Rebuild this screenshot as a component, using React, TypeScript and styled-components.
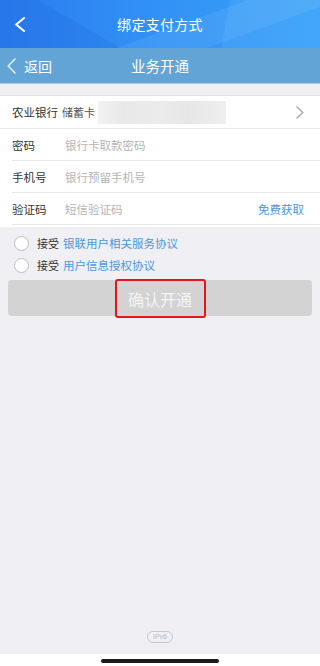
import React from "react";
import styled, { createGlobalStyle } from "styled-components";

const Global = createGlobalStyle`
  html, body { margin: 0; padding: 0; }
  body {
    font-family: "Noto Sans CJK SC", "Noto Sans", sans-serif;
    background: #ffffff;
  }
  * { box-sizing: border-box; }
`;

const Screen = styled.div`
  width: 320px;
  min-height: 666px;
  display: flex;
  flex-direction: column;
  background: #efeff4;
`;

const TopBar = styled.div`
  height: 48px;
  display: grid;
  grid-template-columns: 48px 1fr 48px;
  align-items: center;
  color: #fff;
  background:
    linear-gradient(160deg, rgba(255,255,255,0) 55%, rgba(255,255,255,0.07) 55%, rgba(255,255,255,0.07) 75%, rgba(255,255,255,0) 75%),
    linear-gradient(30deg, rgba(0,40,160,0.08) 30%, rgba(0,0,0,0) 30%),
    linear-gradient(100deg, rgba(255,255,255,0) 70%, rgba(255,255,255,0.06) 70%),
    linear-gradient(90deg, #2a7cf0 0%, #3190f5 45%, #38a1f8 100%);
`;

const TopBack = styled.div`
  display: flex;
  align-items: center;
  padding-left: 15px;
`;

const TopTitle = styled.div`
  text-align: center;
  font-size: 14px;
  letter-spacing: 0.3px;
`;

const SubBar = styled.div`
  height: 36px;
  display: grid;
  grid-template-columns: 80px 1fr 80px;
  align-items: center;
  background: #62a4d6;
  color: #fff;
  border-bottom: 1px solid #a9cdec;
`;

const SubBack = styled.div`
  display: flex;
  align-items: center;
  gap: 8px;
  padding-left: 7px;
  font-size: 14px;
`;

const SubTitle = styled.div`
  text-align: center;
  font-size: 14.5px;
`;

const Card = styled.div`
  margin-top: 11px;
  background: #fff;
  border-top: 1px solid #e4e4e8;
  padding-bottom: 2px;
`;

const Row = styled.div<{ $first?: boolean }>`
  height: ${(p) => (p.$first ? 33 : 32)}px;
  display: flex;
  align-items: center;
  margin-left: ${(p) => (p.$first ? 0 : 12)}px;
  padding-left: ${(p) => (p.$first ? 12 : 0)}px;
  padding-right: 16px;
  border-bottom: 1px solid #e6e6e6;
  font-size: 11.5px;
`;

const Label = styled.span`
  width: 53px;
  color: #333;
  flex-shrink: 0;
`;

const Placeholder = styled.span`
  color: #b4b4b4;
  flex: 1;
`;

const BankName = styled.span`
  color: #333;
`;

const CardType = styled.span`
  color: #555;
  margin-left: 4px;
  font-size: 11px;
`;

const Blur = styled.div`
  width: 128px;
  height: 23px;
  margin-left: 3px;
  background: linear-gradient(90deg, #f2f2f2 0%, #e9e9e9 20%, #ebebeb 50%, #e6e6e6 70%, #efefef 100%);
`;

const Spacer = styled.div`
  flex: 1;
`;

const LinkText = styled.span`
  color: #4a98dc;
`;

const Agreements = styled.div`
  padding-top: 5px;
  display: flex;
  flex-direction: column;
`;

const AgreeRow = styled.div`
  height: 22px;
  display: flex;
  align-items: center;
  padding-left: 14px;
  font-size: 11.5px;
`;

const Circle = styled.span`
  width: 15px;
  height: 15px;
  border-radius: 50%;
  border: 1px solid #bdbdbd;
  background: #fff;
  margin-right: 8px;
  flex-shrink: 0;
`;

const Accept = styled.span`
  color: #333;
  font-size: 11px;
  margin-right: 4px;
`;

const Button = styled.div`
  margin: 4px 8px 0;
  height: 36px;
  border-radius: 4px;
  background: #d3d3d3;
  display: flex;
  align-items: center;
  justify-content: center;
`;

const Highlight = styled.span`
  width: 91px;
  height: 39px;
  margin-top: 1px;
  border: 2px solid #e8141b;
  border-radius: 3px;
  display: flex;
  align-items: center;
  justify-content: center;
  color: #f4f4f4;
  font-size: 16px;
`;

const Footer = styled.div`
  flex: 1;
  display: flex;
  flex-direction: column;
  justify-content: flex-end;
  align-items: center;
  padding-bottom: 11px;
`;

const Badge = styled.span`
  width: 26px;
  height: 12px;
  border: 1px solid #c9c9cc;
  border-radius: 6px;
  font-family: "Liberation Sans", sans-serif;
  font-size: 7px;
  line-height: 10px;
  color: #bbbbbf;
  text-align: center;
`;

const HomeArea = styled.div`
  height: 12px;
  background: #fff;
  display: flex;
  justify-content: center;
  padding-top: 5px;
`;

const HomeBar = styled.div`
  width: 118px;
  height: 4px;
  border-radius: 2px;
  background: #1c1c1c;
`;

const Chevron = ({ w, h, color, sw, dir = "left" }: { w: number; h: number; color: string; sw: number; dir?: "left" | "right" }) => (
  <svg width={w} height={h} viewBox={`0 0 ${w} ${h}`} fill="none">
    {dir === "left" ? (
      <polyline points={`${w - 1},1 1.2,${h / 2} ${w - 1},${h - 1}`} stroke={color} strokeWidth={sw} strokeLinecap="round" strokeLinejoin="round" />
    ) : (
      <polyline points={`1,1 ${w - 1.2},${h / 2} 1,${h - 1}`} stroke={color} strokeWidth={sw} strokeLinecap="round" strokeLinejoin="round" />
    )}
  </svg>
);

export default function App() {
  return (
    <>
      <Global />
      <Screen>
        <TopBar>
          <TopBack>
            <Chevron w={10} h={15} color="#fff" sw={2} />
          </TopBack>
          <TopTitle>绑定支付方式</TopTitle>
          <div />
        </TopBar>
        <SubBar>
          <SubBack>
            <Chevron w={9} h={16} color="#eaf3fb" sw={1.4} />
            <span>返回</span>
          </SubBack>
          <SubTitle>业务开通</SubTitle>
          <div />
        </SubBar>
        <Card>
          <Row $first>
            <BankName>农业银行</BankName>
            <CardType>储蓄卡</CardType>
            <Blur />
            <Spacer />
            <Chevron w={8} h={13} color="#a8a8a8" sw={1.5} dir="right" />
          </Row>
          <Row>
            <Label>密码</Label>
            <Placeholder>银行卡取款密码</Placeholder>
          </Row>
          <Row>
            <Label>手机号</Label>
            <Placeholder>银行预留手机号</Placeholder>
          </Row>
          <Row>
            <Label>验证码</Label>
            <Placeholder>短信验证码</Placeholder>
            <LinkText>免费获取</LinkText>
          </Row>
        </Card>
        <Agreements>
          <AgreeRow>
            <Circle />
            <Accept>接受</Accept>
            <LinkText>银联用户相关服务协议</LinkText>
          </AgreeRow>
          <AgreeRow>
            <Circle />
            <Accept>接受</Accept>
            <LinkText>用户信息授权协议</LinkText>
          </AgreeRow>
        </Agreements>
        <Button>
          <Highlight>确认开通</Highlight>
        </Button>
        <Footer>
          <Badge>IPv6</Badge>
        </Footer>
        <HomeArea>
          <HomeBar />
        </HomeArea>
      </Screen>
    </>
  );
}
